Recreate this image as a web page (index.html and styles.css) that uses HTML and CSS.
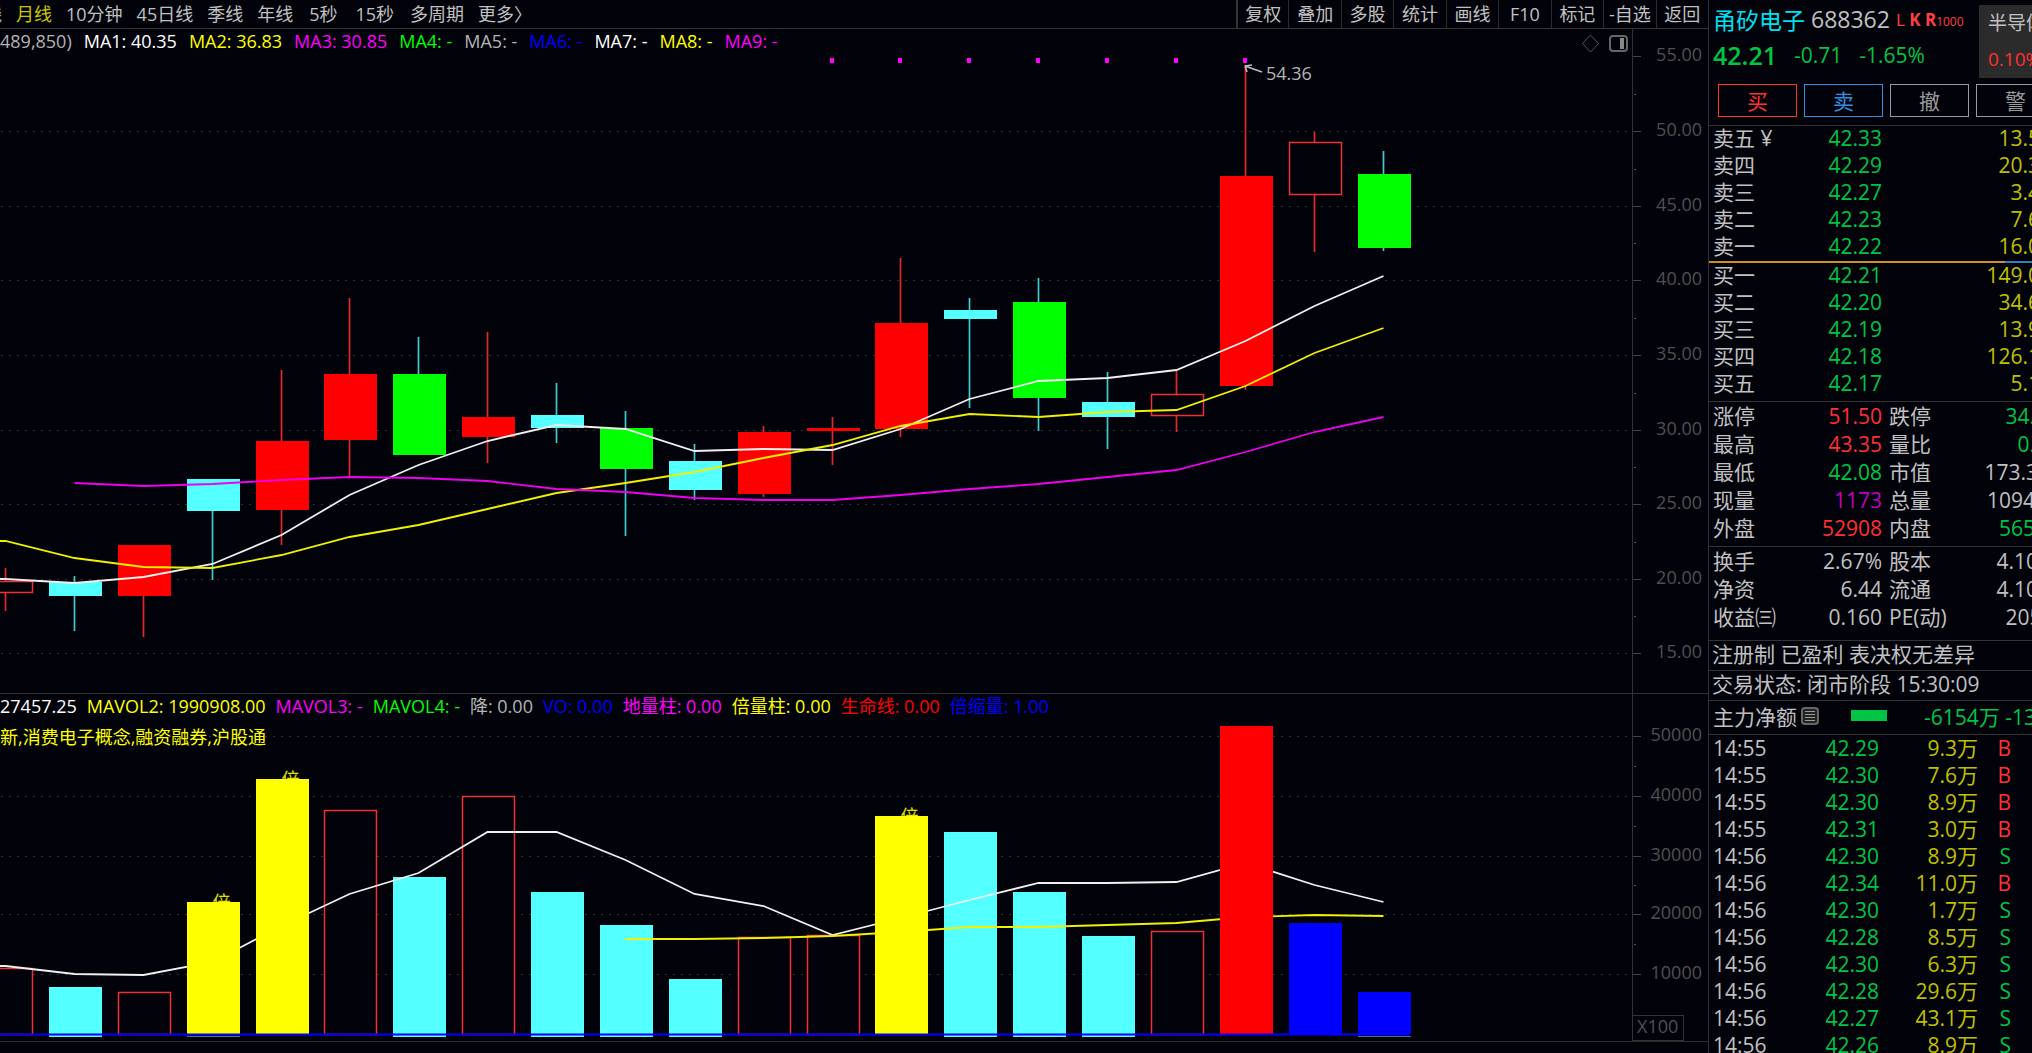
FILE: index.html
```html
<!DOCTYPE html>
<html lang="zh-CN">
<head>
  <meta charset="UTF-8">
  <title>甬矽电子 688362</title>
  <link rel="stylesheet" href="styles.css">
</head>
<body>
  <main class="main">
    <nav class="toolbar">
      <div class="periods">
        <button class="first">线</button>
        <button class="active">月线</button>
        <button>10分钟</button>
        <button>45日线</button>
        <button>季线</button>
        <button>年线</button>
        <button class="sec">5秒</button>
        <button class="sec">15秒</button>
        <button>多周期</button>
        <button>更多〉</button>
      </div>
      <div class="tools">
        <button>复权</button>
        <button>叠加</button>
        <button>多股</button>
        <button>统计</button>
        <button>画线</button>
        <button>F10</button>
        <button>标记</button>
        <button>-自选</button>
        <button>返回</button>
      </div>
    </nav>

    <section class="pane">
      <svg id="priceChart" class="chart" viewBox="0 29 1708 664"></svg>
      <div class="legend">
        <span class="grey">489,850)</span>
        <span class="white">MA1: 40.35</span>
        <span class="yellow">MA2: 36.83</span>
        <span class="magenta">MA3: 30.85</span>
        <span class="lime">MA4: -</span>
        <span class="grey">MA5: -</span>
        <span class="blue">MA6: -</span>
        <span class="white">MA7: -</span>
        <span class="yellow">MA8: -</span>
        <span class="magenta">MA9: -</span>
      </div>
    </section>

    <section class="pane pane-vol">
      <svg id="volChart" class="chart" viewBox="0 694 1708 347"></svg>
      <div class="legend">
        <span class="white">27457.25</span>
        <span class="yellow">MAVOL2: 1990908.00</span>
        <span class="magenta">MAVOL3: -</span>
        <span class="lime">MAVOL4: -</span>
        <span class="grey">降: 0.00</span>
        <span class="blue">VO: 0.00</span>
        <span class="magenta">地量柱: 0.00</span>
        <span class="yellow">倍量柱: 0.00</span>
        <span class="pure-red">生命线: 0.00</span>
        <span class="blue">倍缩量: 1.00</span>
        <p class="concepts">新,消费电子概念,融资融券,沪股通</p>
      </div>
    </section>
  </main>

  <aside class="side">
    <div class="panel">
      <header class="quote">
        <div>
          <h1><span class="name">甬矽电子</span> <span class="code">688362</span> <span class="tags">L <b>K R</b><small>1000</small></span></h1>
          <p class="price"><strong>42.21</strong><span>-0.71</span><span>-1.65%</span></p>
        </div>
        <div class="board"><span>半导体</span><span class="red">0.10%</span></div>
      </header>

      <div class="actions">
        <button class="buy">买</button>
        <button class="sell">卖</button>
        <button>撤</button>
        <button>警</button>
      </div>

      <table class="orders asks">
        <tr><th>卖五 ¥</th><td>42.33</td><td>13.5</td></tr>
        <tr><th>卖四</th><td>42.29</td><td>20.3</td></tr>
        <tr><th>卖三</th><td>42.27</td><td>3.4</td></tr>
        <tr><th>卖二</th><td>42.23</td><td>7.6</td></tr>
        <tr><th>卖一</th><td>42.22</td><td>16.0</td></tr>
      </table>
      <div class="balance"><i></i></div>
      <table class="orders bids">
        <tr><th>买一</th><td>42.21</td><td>149.0</td></tr>
        <tr><th>买二</th><td>42.20</td><td>34.6</td></tr>
        <tr><th>买三</th><td>42.19</td><td>13.9</td></tr>
        <tr><th>买四</th><td>42.18</td><td>126.1</td></tr>
        <tr><th>买五</th><td>42.17</td><td>5.1</td></tr>
      </table>

      <table class="stats">
        <tr><th>涨停</th><td class="red">51.50</td><th>跌停</th><td class="green">34.34</td></tr>
        <tr><th>最高</th><td class="red">43.35</td><th>量比</th><td class="green">0.73</td></tr>
        <tr><th>最低</th><td class="green">42.08</td><th>市值</th><td>173.3亿</td></tr>
        <tr><th>现量</th><td class="purple">1173</td><th>总量</th><td>109471</td></tr>
        <tr><th>外盘</th><td class="red">52908</td><th>内盘</th><td class="green">56563</td></tr>
      </table>
      <table class="stats stats-base">
        <tr><th>换手</th><td>2.67%</td><th>股本</th><td>4.10亿</td></tr>
        <tr><th>净资</th><td>6.44</td><th>流通</th><td>4.10亿</td></tr>
        <tr><th>收益㈢</th><td>0.160</td><th>PE(动)</th><td>205.7</td></tr>
      </table>

      <p class="note">注册制 已盈利 表决权无差异</p>
      <p class="note">交易状态: 闭市阶段 15:30:09</p>
      <div class="flow">
        <span>主力净额</span>
        <svg width="18" height="18" viewBox="0 0 18 18">
          <rect x="1" y="1" width="16" height="16" rx="3" fill="#222" stroke="#666" stroke-width="2"/>
          <path d="M4 4.5h10M4 7.5h10M4 10.5h10M4 13.5h10" stroke="#999"/>
        </svg>
        <i class="flow-bar"></i>
        <span class="green flow-value">-6154万 -13%</span>
      </div>

      <table class="ticks">
        <tr><th>14:55</th><td>42.29</td><td>9.3万</td><td class="red">B</td></tr>
        <tr><th>14:55</th><td>42.30</td><td>7.6万</td><td class="red">B</td></tr>
        <tr><th>14:55</th><td>42.30</td><td>8.9万</td><td class="red">B</td></tr>
        <tr><th>14:55</th><td>42.31</td><td>3.0万</td><td class="red">B</td></tr>
        <tr><th>14:56</th><td>42.30</td><td>8.9万</td><td class="green">S</td></tr>
        <tr><th>14:56</th><td>42.34</td><td>11.0万</td><td class="red">B</td></tr>
        <tr><th>14:56</th><td>42.30</td><td>1.7万</td><td class="green">S</td></tr>
        <tr><th>14:56</th><td>42.28</td><td>8.5万</td><td class="green">S</td></tr>
        <tr><th>14:56</th><td>42.30</td><td>6.3万</td><td class="green">S</td></tr>
        <tr><th>14:56</th><td>42.28</td><td>29.6万</td><td class="green">S</td></tr>
        <tr><th>14:56</th><td>42.27</td><td>43.1万</td><td class="green">S</td></tr>
        <tr><th>14:56</th><td>42.26</td><td>8.9万</td><td class="green">S</td></tr>
      </table>
    </div>
  </aside>

  <script src="chart.js"></script>
</body>
</html>
```
FILE: styles.css
```css
* {
  box-sizing: border-box;
}

body {
  margin: 0;
  display: flex;
  height: 100vh;
  overflow: hidden;
  background-color: #02030a;
  color: #c0c0c0;
  font-family: "Open Sans", "Noto Sans CJK SC", sans-serif;
  font-size: 18px;
}

h1, p {
  margin: 0;
  font-weight: normal;
}

button {
  background: none;
  border: none;
  padding: 0;
  color: inherit;
  font: inherit;
  white-space: nowrap;
  cursor: pointer;
}

table {
  border-spacing: 0;
  table-layout: fixed;
}

th, td {
  padding: 0;
  font-weight: normal;
  text-align: right;
  vertical-align: top;
  white-space: nowrap;
}

th {
  text-align: left;
}

.white { color: #fff; }
.grey { color: #b4b4b4; }
.yellow { color: #ff0; }
.magenta { color: #f0f; }
.lime { color: #0f0; }
.blue { color: #00f; }
.pure-red { color: #f00; }
.red { color: #ff3030; }
.green { color: #00c544; }
.purple { color: #c000c0; }

/* left side */
.main {
  flex: 1;
  min-width: 0;
}

.toolbar {
  display: flex;
  justify-content: space-between;
  height: 29px;
  border-bottom: 1px solid #333;
  line-height: 26px;
  overflow: hidden;
}

.periods {
  display: flex;
}

.periods button {
  padding: 0 7px;
}

.periods .first {
  margin-left: -23px;
}

.periods .sec {
  padding: 0 9px;
}

.periods .active {
  color: #c8c800;
}

.tools {
  display: grid;
  grid-template-columns: repeat(9, 1fr);
  width: 472px;
}

.tools button {
  border-left: 1px solid #2c2c2c;
}

.tools button:first-child {
  border-left: 2px solid #333;
}

.pane {
  display: grid;
}

.pane-vol {
  border-top: 1px solid #333;
  border-bottom: 1px solid #2c2c2c;
}

.chart {
  grid-area: 1 / 1;
  display: block;
  width: 100%;
}

.chart text {
  font-size: 18px;
  fill: #505050;
}

.chart .peak {
  fill: #b4b4b4;
}

.chart .mark {
  fill: #e0e000;
}

.legend {
  grid-area: 1 / 1;
  align-self: start;
  display: flex;
  flex-wrap: wrap;
  column-gap: 12px;
  line-height: 24px;
  white-space: nowrap;
}

.pane-vol .legend {
  line-height: 24px;
  column-gap: 10px;
}

.concepts {
  width: 100%;
  padding-top: 7px;
  color: #ff0;
}

/* right side */
.side {
  flex: 0 0 324px;
  border-left: 1px solid #333;
  overflow: hidden;
  font-size: 21px;
}

.panel {
  width: 352px;
}

.quote {
  display: flex;
  justify-content: space-between;
  height: 84px;
  padding-left: 4px;
}

.quote h1 {
  display: flex;
  align-items: center;
  gap: 6px;
  height: 38px;
  font-size: 23px;
}

.name {
  color: #00e0f0;
}

.tags {
  color: #ff4040;
  font-size: 17px;
}

.tags small {
  font-size: 12px;
}

.price {
  display: flex;
  align-items: center;
  gap: 17px;
  height: 34px;
  color: #00c544;
}

.price strong {
  font-size: 25px;
  font-weight: 600;
}

.board {
  display: flex;
  flex-direction: column;
  width: 82px;
  height: 73px;
  margin-top: 5px;
  padding-left: 9px;
  background-color: #2b2b2b;
  font-size: 19px;
  line-height: 36px;
}

.actions {
  display: grid;
  grid-template-columns: repeat(4, 79px);
  gap: 7px;
  height: 42px;
  padding: 0 0 8px 9px;
  border-bottom: 1px solid #333;
}

.actions button {
  border: 1px solid #999;
  line-height: 30px;
  color: #999;
}

.actions .buy {
  border-color: #ff3030;
  color: #ff3030;
}

.actions .sell {
  border-color: #3090e0;
  color: #3090e0;
}

.orders {
  width: 331px;
  line-height: 25px;
}

.orders th {
  width: 87px;
  padding-left: 4px;
}

.orders td {
  height: 27px;
  color: #00c544;
}

.orders td:nth-child(2) {
  width: 86px;
}

.orders td:last-child {
  color: #c0c000;
}

.balance {
  height: 2px;
  background-color: #3080c0;
}

.balance i {
  display: block;
  width: 84%;
  height: 2px;
  background-color: #d09020;
}

.bids {
  margin-bottom: 3px;
}

.stats {
  width: 350px;
  border-top: 1px solid #333;
  line-height: 28px;
}

.stats th {
  width: 87px;
  padding-left: 4px;
}

.stats td {
  height: 28px;
}

.stats td:nth-child(2) {
  width: 86px;
}

.stats th:nth-child(3) {
  padding-left: 7px;
}

.stats-base {
  margin-top: 4px;
  margin-bottom: 9px;
}

.note {
  height: 30px;
  padding-left: 3px;
  border-top: 1px solid #333;
  line-height: 27px;
}

.flow {
  display: flex;
  align-items: center;
  height: 35px;
  padding-left: 4px;
  padding-bottom: 4px;
  border-top: 1px solid #333;
  border-bottom: 1px solid #333;
  white-space: nowrap;
}

.flow svg {
  margin-left: 4px;
}

.flow-bar {
  width: 36px;
  height: 11px;
  margin: 0 37px 0 32px;
  background-color: #00c544;
}

.ticks {
  width: 302px;
  line-height: 26px;
}

.ticks th {
  width: 84px;
  padding-left: 4px;
}

.ticks td {
  height: 27px;
}

.ticks td:nth-child(2) {
  width: 86px;
  color: #00c544;
}

.ticks td:nth-child(3) {
  width: 99px;
  color: #c0c000;
}
```
FILE: chart.js
```js
const NS = "http://www.w3.org/2000/svg";
const price = document.getElementById("priceChart");
const vol = document.getElementById("volChart");

const STEP = 68.87;
const BODY = 53;
const AXIS = 1632;
const BASE = 1034;

const colors = { r: "#ff0000", g: "#00ff00", c: "#54ffff", y: "#ffff00", b: "#0000ff" };

// type, high, body top, body bottom, low (h = hollow)
const candles = [
  ["h", 568, 581, 592, 611], ["c", 576, 582, 596, 631], ["r", 545, 545, 596, 637],
  ["c", 479, 479, 511, 580], ["r", 370, 441, 510, 545], ["r", 298, 374, 440, 477],
  ["g", 337, 374, 455, 455], ["r", 332, 417, 437, 463], ["c", 383, 415, 428, 443],
  ["g", 411, 428, 469, 536], ["c", 444, 461, 490, 500], ["r", 426, 432, 494, 497],
  ["r", 417, 428, 431, 465], ["r", 258, 323, 429, 437], ["c", 298, 310, 319, 408],
  ["g", 278, 302, 398, 431], ["c", 372, 402, 417, 449], ["h", 371, 394, 415, 432],
  ["r", 65, 176, 386, 390], ["h", 132, 142, 194, 252], ["g", 151, 174, 248, 251]
];

const volumes = [
  ["h", 968], ["c", 987], ["h", 992], ["y", 902], ["y", 779], ["h", 810], ["c", 877],
  ["h", 796], ["c", 892], ["c", 925], ["c", 979], ["h", 937], ["h", 935], ["y", 816],
  ["c", 832], ["c", 892], ["c", 936], ["h", 931], ["r", 726], ["b", 923], ["b", 992]
];

const ma1 = [579, 583, 577, 564, 535, 495, 465, 441, 425, 429, 451, 449, 450, 429, 399, 381, 378, 370, 341, 306, 276];
const ma2 = [541, 558, 567, 568, 555, 537, 525, 509, 493, 483, 472, 458, 445, 426, 414, 417, 412, 410, 386, 353, 328];
const ma3 = [483, 486, 484, 480, 477, 478, 481, 489, 492, 498, 500, 500, 495, 489, 484, 477, 470, 452, 432, 417];
const vol1 = [966, 974, 975, 962, 926, 894, 873, 832, 832, 860, 894, 906, 935, 918, 900, 883, 883, 882, 863, 885, 902];
const vol2 = [939, 939, 938, 936, 932, 927, 927, 925, 923, 917, 915, 916];

function add(svg, name, attrs, text) {
  const el = document.createElementNS(NS, name);
  for (const key in attrs) el.setAttribute(key, attrs[key]);
  if (text) el.textContent = text;
  svg.appendChild(el);
}

function cx(i) {
  return Math.floor(5.6 + i * STEP) + 0.5;
}

function rule(svg, x1, y1, x2, y2, stroke, extra) {
  add(svg, "line", { x1, y1, x2, y2, stroke, ...extra });
}

function curve(svg, values, start, stroke) {
  const points = values.map((y, i) => cx(i + start) + "," + y);
  if (start === 0) points.unshift("-5," + values[0]);
  add(svg, "polyline", { points: points.join(" "), fill: "none", stroke, "stroke-width": 1.8 });
}

function box(svg, type, i, top, bottom) {
  const x = cx(i) - 25.5;
  if (type === "h") {
    add(svg, "rect", { x: x + 0.5, y: top + 0.5, width: BODY - 1, height: bottom - top, fill: "#02030a", stroke: "#f03030", "stroke-width": 1.5 });
  } else {
    add(svg, "rect", { x, y: top, width: BODY, height: bottom - top, fill: colors[type] });
  }
}

function axis(svg, levels, top, bottom) {
  levels.forEach(([label, y], i) => {
    if (i > 0 || svg === vol) rule(svg, 1, y + 0.5, AXIS, y + 0.5, "#303030", { "stroke-dasharray": "2 6" });
    rule(svg, AXIS, y + 0.5, AXIS + 9, y + 0.5, "#444");
    add(svg, "text", { x: 1702, y: y + 5, "text-anchor": "end" }, label);
    if (i > 0) {
      const mid = Math.round((y + levels[i - 1][1]) / 2) + 0.5;
      rule(svg, AXIS + 2, mid, AXIS + 4, mid, "#555");
    }
  });
  rule(svg, AXIS + 0.5, top, AXIS + 0.5, bottom, "#333");
}

// price pane
axis(price, [["55.00", 56], ["50.00", 131], ["45.00", 206], ["40.00", 280], ["35.00", 355],
  ["30.00", 430], ["25.00", 504], ["20.00", 579], ["15.00", 653]], 29, 693);

candles.forEach(([type, high, top, bottom, low], i) => {
  const wick = type === "r" || type === "h" ? "#e02828" : "#40cccc";
  rule(price, cx(i), high, cx(i), low, wick, { "stroke-width": 1.7 });
  box(price, type, i, top, bottom);
  if (i >= 12 && i <= 18) add(price, "rect", { x: cx(i) - 2.5, y: 58, width: 4, height: 5, fill: "#ff00ff" });
});

curve(price, ma1, 0, "#f0f0f0");
curve(price, ma2, 0, "#f0f000");
curve(price, ma3, 1, "#f000f0");

add(price, "path", { d: "M1245 66l17 6M1245 66l2 6M1245 66l7-1", stroke: "#c0c0c0", "stroke-width": 1.5, fill: "none" });
add(price, "text", { x: 1266, y: 80, class: "peak" }, "54.36");

add(price, "path", { d: "M1590.5 35l8 8.5-8 8.5-8-8.5z", stroke: "#555", fill: "none" });
add(price, "rect", { x: 1610, y: 36, width: 17, height: 15, rx: 3, stroke: "#666", "stroke-width": 2, fill: "none" });
add(price, "rect", { x: 1620, y: 38, width: 4, height: 11, fill: "#888" });

// volume pane
axis(vol, [["50000", 736], ["40000", 796], ["30000", 856], ["20000", 914], ["10000", 974]], 694, 1041);

function bar(i) {
  const [type, top] = volumes[i];
  box(vol, type, i, top, type === "c" ? BASE + 3 : BASE);
}

const covering = [3, 4, 13, 18];
volumes.forEach((v, i) => { if (!covering.includes(i)) bar(i); });
curve(vol, vol1, 0, "#f0f0f0");
curve(vol, vol2, 9, "#f0f000");

// doubled-volume marks sit behind the bar tops
[3, 4, 13].forEach(i => {
  add(vol, "text", { x: cx(i), y: volumes[i][1] + 7, class: "mark" }, "倍");
});
covering.forEach(bar);

rule(vol, 0, BASE + 0.5, cx(20) + 26, BASE + 0.5, "#0000ff", { "stroke-width": 2 });
[3, 20].forEach(i => rule(vol, cx(i) - 25.5, BASE + 2.5, cx(i) + 27.5, BASE + 2.5, "#2a7f90"));
add(vol, "rect", { x: AXIS + 0.5, y: 1015.5, width: 51, height: 25, fill: "none", stroke: "#333" });
add(vol, "text", { x: 1637, y: 1033 }, "X100");
```
